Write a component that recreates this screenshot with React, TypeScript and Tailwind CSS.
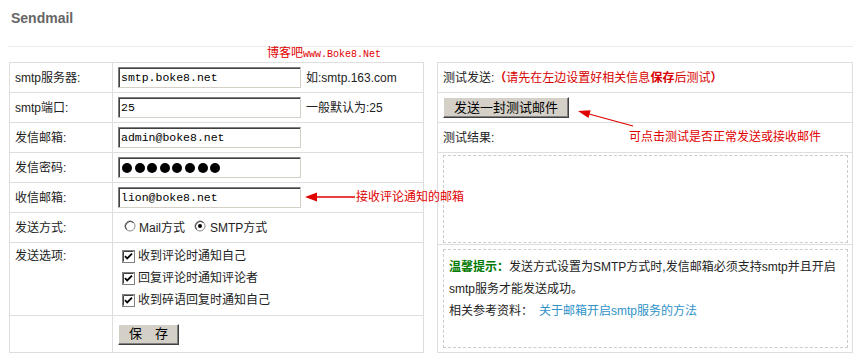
import type { ReactNode } from 'react';

const line = 'border-[#dedede]';

const TextInput = ({ value }: { value: string }) => (
  <input
    readOnly
    defaultValue={value}
    className="w-[183px] h-[21px] border border-t-[#808080] border-l-[#808080] border-b-[#d4d0c8] border-r-[#d4d0c8] shadow-[inset_1px_1px_0_#404040] bg-white pl-[2px] text-[11.5px] text-black font-['Liberation_Mono',monospace] outline-none"
  />
);

const Radio = ({ checked }: { checked?: boolean }) => (
  <svg width="12" height="12" viewBox="0 0 12 12" className="mb-[4px]">
    <circle cx="6" cy="6" r="5" fill="#fff" stroke="#8a8a8a" />
    <path d="M2.5 9.5A5 5 0 0 1 9.5 2.5" fill="none" stroke="#404040" />
    {checked && <circle cx="6" cy="6" r="2" fill="#000" />}
  </svg>
);

const Checkbox = () => (
  <svg width="13" height="13" viewBox="0 0 13 13">
    <rect x="0.5" y="0.5" width="12" height="12" fill="#fff" stroke="#808080" />
    <path d="M1.5 11.5V1.5H11.5" fill="none" stroke="#404040" />
    <path d="M3 6.2l2.2 2.3L10 3.7" fill="none" stroke="#000" strokeWidth="1.8" />
  </svg>
);

const Row = ({ label, className, children }: { label?: string; className: string; children?: ReactNode }) => (
  <div className={`flex ${className}`}>
    <div className={`w-[103px] border-r ${line} pl-[5px] flex items-center`}>{label}</div>
    <div className="flex-1 pl-[5px] flex items-center">{children}</div>
  </div>
);

export default function App() {
  return (
    <div className="w-[863px] h-[362px] bg-white relative overflow-hidden text-[12px] text-[#222] font-['Liberation_Sans','Noto_Sans_CJK_SC',sans-serif]">
      <div className="h-[46px] pl-[11px] pt-[10px] text-[14px] leading-[16px] font-bold text-[#666]">Sendmail</div>
      <div className="ml-[8px] w-[845px] h-px bg-[#ebebeb]" />
      <div className="h-[15px] pl-[267px] leading-[13px] text-[#e00000]">
        博客吧<span className="font-['Liberation_Mono',monospace] text-[10px]">www.Boke8.Net</span>
      </div>

      <div className="flex items-start ml-[9px] gap-[13px]">
        {/* left: settings */}
        <div className={`w-[415px] border ${line}`}>
          <Row label="smtp服务器:" className={`h-[30px] border-b ${line}`}>
            <TextInput value="smtp.boke8.net" />
            <span className="ml-[5px]">如:smtp.163.com</span>
          </Row>
          <Row label="smtp端口:" className={`h-[30px] border-b ${line}`}>
            <TextInput value="25" />
            <span className="ml-[5px]">一般默认为:25</span>
          </Row>
          <Row label="发信邮箱:" className={`h-[30px] border-b ${line}`}>
            <TextInput value="admin@boke8.net" />
          </Row>
          <Row label="发信密码:" className={`h-[30px] border-b ${line}`}>
            <div className="w-[183px] h-[21px] border border-t-[#808080] border-l-[#808080] border-b-[#d4d0c8] border-r-[#d4d0c8] shadow-[inset_1px_1px_0_#404040] bg-white pl-[3px] flex items-center gap-[2.6px]">
              {[0, 1, 2, 3, 4, 5, 6, 7].map((i) => (
                <span key={i} className="w-[10px] h-[10px] rounded-full bg-black" />
              ))}
            </div>
          </Row>
          <Row label="收信邮箱:" className={`h-[30px] border-b ${line}`}>
            <TextInput value="lion@boke8.net" />
          </Row>
          <Row label="发送方式:" className={`h-[30px] border-b ${line}`}>
            <div className="flex items-center pl-[6px]">
              <Radio />
              <span className="ml-[3px]">Mail方式</span>
              <span className="ml-[9px]" />
              <Radio checked />
              <span className="ml-[4px]">SMTP方式</span>
            </div>
          </Row>
          <div className={`flex h-[73px] border-b ${line}`}>
            <div className={`w-[103px] border-r ${line} pl-[5px] pt-[2px] leading-[22px]`}>发送选项:</div>
            <div className="flex-1 pl-[9px] pt-[2px] flex flex-col">
              {['收到评论时通知自己', '回复评论时通知评论者', '收到碎语回复时通知自己'].map((t) => (
                <div key={t} className="h-[22px] flex items-center gap-[3px]">
                  <Checkbox />
                  <span>{t}</span>
                </div>
              ))}
            </div>
          </div>
          <Row className="h-[36px]">
            <button className="w-[61px] h-[21px] bg-[#d4d0c8] border border-t-white border-l-white border-b-[#404040] border-r-[#404040] shadow-[inset_-1px_-1px_0_#808080] text-[13px] text-black flex items-center justify-center gap-[13px]">
              <span>保</span>
              <span>存</span>
            </button>
          </Row>
        </div>

        {/* right: test */}
        <div className={`w-[416px] border ${line}`}>
          <div className={`h-[30px] border-b ${line} pl-[5px] flex items-center`}>
            测试发送:
            <span className="text-[#d80000]">
              <b>（</b>请先在左边设置好相关信息<b>保存</b>后测试<b>）</b>
            </span>
          </div>
          <div className={`h-[30px] border-b ${line} pl-[5px] flex items-center`}>
            <button className="w-[126px] h-[21px] bg-[#d4d0c8] border border-t-white border-l-white border-b-[#404040] border-r-[#404040] shadow-[inset_-1px_-1px_0_#808080] text-[13px] text-black">
              发送一封测试邮件
            </button>
          </div>
          <div className={`h-[30px] border-b ${line} pl-[5px] flex items-center`}>测试结果:</div>
          <div className={`h-[92px] border-b ${line} pt-[2px] pl-[5px] pr-[4px]`}>
            <div className="h-[88px] border border-dashed border-[#cccccc]" />
          </div>
          <div className="h-[107px] pt-[4px] pl-[5px] pr-[4px]">
            <div className="h-[99px] border border-dashed border-[#cccccc] pl-[5px] pt-[6px] leading-[22px] whitespace-nowrap">
              <b className="text-[#007a00]">温馨提示：</b>发送方式设置为SMTP方式时,发信邮箱必须支持smtp并且开启
              <br />
              smtp服务才能发送成功。
              <br />
              相关参考资料：<span className="ml-[6px] text-[#2f92c8]">关于邮箱开启smtp服务的方法</span>
            </div>
          </div>
        </div>
      </div>

      {/* annotations */}
      <svg className="absolute left-[303px] top-[190px]" width="52" height="14" viewBox="0 0 52 14">
        <polygon points="2,7 14,2.5 14,11.5" fill="#e00000" />
        <line x1="13" y1="7" x2="52" y2="7" stroke="#e00000" strokeWidth="1.4" />
      </svg>
      <span className="absolute left-[356px] top-[189px] leading-[16px] text-[#e00000]">接收评论通知的邮箱</span>

      <svg className="absolute left-[570px] top-[100px]" width="70" height="32" viewBox="0 0 70 32">
        <polygon points="8,11 18.5,18.1 20.6,10.3" fill="#e00000" />
        <line x1="19" y1="14" x2="63" y2="26" stroke="#e00000" strokeWidth="1.2" />
      </svg>
      <span className="absolute left-[629px] top-[129px] leading-[16px] text-[#e00000]">可点击测试是否正常发送或接收邮件</span>
    </div>
  );
}
